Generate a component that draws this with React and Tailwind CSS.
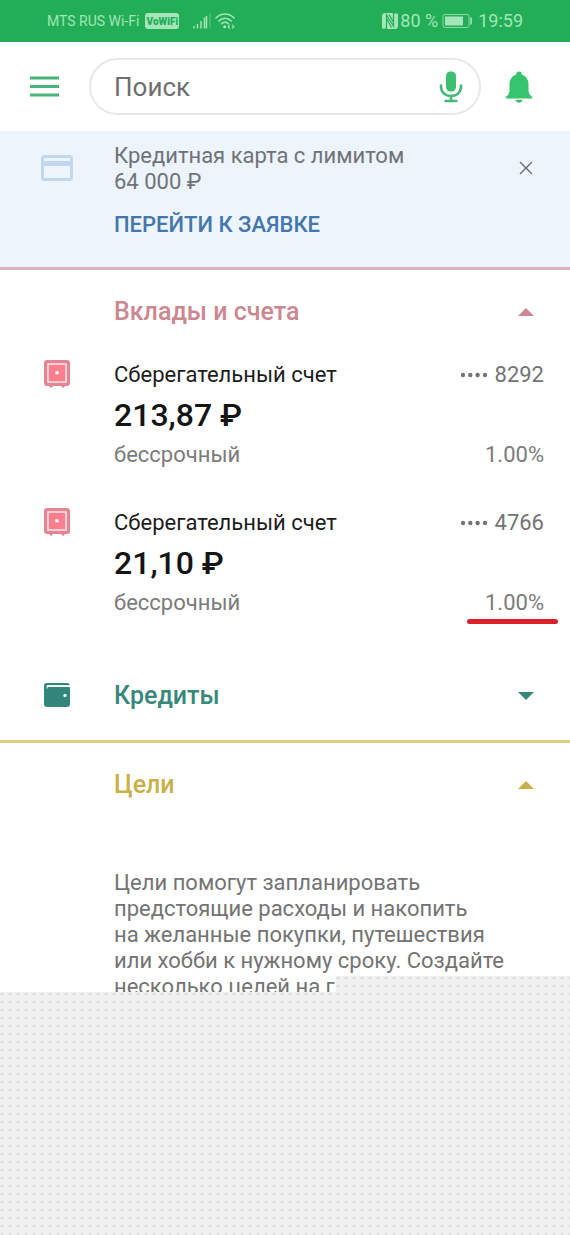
import React from "react";

const TEXT = "text-[22px] leading-[26px]";
const DOTTED =
  "bg-[#f0f0f0] bg-[radial-gradient(circle_at_2px_2px,#e0e0e0_1px,transparent_2px)] bg-[size:8px_8px]";

function Caret({ down }) {
  return (
    <svg viewBox="0 0 16 8" aria-hidden="true" className="h-2 w-4">
      <path d={down ? "M0 0h16L8 8z" : "M0 8h16L8 0z"} fill="currentColor" />
    </svg>
  );
}

function SafeIcon() {
  return (
    <svg viewBox="0 0 26 28" aria-hidden="true" className="h-7 w-[26px]">
      <path d="M5 25h4l-1 2.500H6zM17 25h4l-1 2.500h-2z" fill="#d9808f" />
      <rect width="26" height="26" rx="3" fill="#e58594" />
      <rect x="4" y="4" width="18" height="18" fill="#fd7f8e" stroke="#fce9eb" strokeWidth="1.500" />
      <rect x="11.300" y="11.300" width="3.400" height="3" rx="0.600" fill="#fff" />
    </svg>
  );
}

function WalletIcon() {
  return (
    <svg viewBox="0 0 26 26" aria-hidden="true" className="h-[26px] w-[26px]">
      <path
        fill="#33867b"
        d="M3 0h20a3 3 0 0 1 3 2.400H3.400a.8.8 0 0 0 0 1.600H25a1 1 0 0 1 1 1V21a3 3 0 0 1-3 3H3a3 3 0 0 1-3-3V3a3 3 0 0 1 3-3z"
      />
      <path fill="#fff" d="M3.600 2.300H26v1.500H3.600v1.700H2.700V3.200q0-.9.9-.9z" />
      <circle cx="21" cy="12.500" r="1.700" fill="#e6f6f3" />
    </svg>
  );
}

function StatusBar() {
  return (
    <div className="flex h-[42px] items-center justify-between bg-[#22ad57] px-[47px] text-[#a4e6b8]">
      <div className="flex items-center">
        <span className="text-[14px] leading-4">MTS RUS Wi-Fi</span>
        <span className="ml-1.5 flex h-4 w-[34px] items-center justify-center rounded-[3px] bg-[#a4e6b8] text-[10px] font-black text-[#22ad57]">
          VoWiFi
        </span>
        <svg viewBox="0 0 18 16" aria-hidden="true" className="ml-3.5 h-4 w-[18px]">
          <path d="M1 13v2.500M4.500 11v4.500M8 8v7.500M11.500 4.500v11M13.500 3v12.500" stroke="currentColor" strokeWidth="1.500" fill="none" />
          <path d="M17 0v15.500" stroke="currentColor" strokeWidth="1" opacity="0.45" />
        </svg>
        <svg viewBox="0 0 20 16" aria-hidden="true" className="ml-1 h-4 w-5">
          <g fill="none" stroke="currentColor" strokeWidth="1.600" strokeLinecap="round">
            <path d="M1 5c5-5.300 13-5.300 18 0M3.800 8c3.500-3.700 9-3.700 12.400 0M6.600 10.800c2-2 4.700-2 6.600-.2" />
            <path d="M14.500 12.200L13.200 13.700l1.300 1.500M17.500 12.200l1.300 1.500-1.300 1.500" strokeWidth="1.200" />
          </g>
          <circle cx="9.700" cy="13.700" r="1.500" fill="currentColor" />
        </svg>
      </div>
      <div className="flex items-center text-[18px] leading-5">
        <svg viewBox="0 0 16 16" aria-hidden="true" className="h-4 w-4">
          <path d="M3 0h8l2 1 1-1a2 2 0 0 1 2 2v11a3 3 0 0 1-3 3H5l-1.500-1L2 16a2 2 0 0 1-2-2V3a3 3 0 0 1 3-3z" fill="currentColor" />
          <path d="M4.500 16V2l7 11V0M5 6l4.500 8.500M7 1.500l4 7" fill="none" stroke="#22ad57" strokeWidth="1.200" />
        </svg>
        <span className="ml-0.5">80 %</span>
        <svg viewBox="0 0 30 16" aria-hidden="true" className="mr-1.5 ml-1 h-4 w-[30px]">
          <rect x="1" y="1.500" width="26" height="13" rx="2" fill="none" stroke="currentColor" strokeWidth="1" opacity="0.8" />
          <rect x="3" y="3.500" width="18" height="9" fill="currentColor" />
          <path d="M29 4.500v7" stroke="currentColor" strokeWidth="1.600" />
        </svg>
        <span>19:59</span>
      </div>
    </div>
  );
}

function Header() {
  return (
    <header className="flex h-[89px] items-center pr-[37px] pl-[29px]">
      <button type="button" aria-label="Меню" className="h-6 w-[31px] shrink-0">
        <svg viewBox="0 0 31 24" aria-hidden="true" className="h-6 w-[31px]">
          <path d="M1 3h29M1 11.500h29M1 20h29" stroke="#49b57b" strokeWidth="3" />
        </svg>
      </button>
      <label className="ml-[29px] flex h-[57px] min-w-0 flex-1 items-center rounded-full border-2 border-[#e8e8e8] pr-4 pl-[23px]">
        <input
          type="text"
          aria-label="Поиск"
          placeholder="Поиск"
          className="w-full min-w-0 flex-1 bg-transparent text-[26px] leading-8 text-[#6e6e6e] outline-none placeholder:text-[#6e6e6e]"
        />
        <button type="button" aria-label="Голосовой поиск" className="h-8 w-6 shrink-0">
          <svg viewBox="0 0 24 32" aria-hidden="true" className="h-8 w-6">
            <rect x="7" y="0.500" width="10" height="20" rx="4.500" fill="#3cc06f" />
            <path d="M2 14.500v1c0 5.500 4 9.500 10 9.500s10-4 10-9.500v-1" fill="none" stroke="#43b877" strokeWidth="2.600" strokeLinecap="round" />
            <path d="M12 25v4M6.500 30h11" fill="none" stroke="#43b877" strokeWidth="2.400" strokeLinecap="round" />
          </svg>
        </button>
      </label>
      <button type="button" aria-label="Уведомления" className="ml-6 h-8 w-7 shrink-0">
        <svg viewBox="0 0 28 32" aria-hidden="true" className="h-8 w-7">
          <path
            fill="#36c46c"
            d="M14 0.500c1.700 0 2.800 1.100 2.800 2.700v.6c4.400 1.200 6.700 5 6.700 9.700v7l1.300 3.300 2.200 1.900c.8.700.5 1.800-.4 1.800H1.400c-.9 0-1.200-1.100-.4-1.800l2.200-1.900 1.300-3.300v-7c0-4.700 2.300-8.500 6.700-9.700v-.6C11.200 1.600 12.300.5 14 .5z"
          />
          <path d="M10.500 28.800h7c-.3 1.800-1.700 3-3.500 3s-3.200-1.200-3.500-3z" fill="#45b878" />
        </svg>
      </button>
    </header>
  );
}

function Offer() {
  return (
    <section className="flex items-start border-b-[3px] border-[#dfb3bb] bg-[#edf4fc] pt-3 pr-[37px] pb-7 pl-[41px]">
      <svg viewBox="0 0 32 26" aria-hidden="true" className="mt-3 h-[26px] w-8 shrink-0">
        <rect x="1.500" y="1.500" width="29" height="23" rx="2" fill="none" stroke="#c1d6ef" strokeWidth="3" />
        <path d="M1 8.500h30" stroke="#c1d6ef" strokeWidth="5" />
      </svg>
      <div className="ml-[41px] flex-1">
        <p className={`${TEXT} text-[#6f7378]`}>
          Кредитная карта с лимитом
          <br />
          64 000 ₽
        </p>
        <a href="#application" className="mt-4 block text-[22px] leading-[28px] font-medium text-[#4477ac]">
          ПЕРЕЙТИ К ЗАЯВКЕ
        </a>
      </div>
      <button type="button" aria-label="Закрыть" className="mt-[18px] h-[14px] w-[14px]">
        <svg viewBox="0 0 14 14" aria-hidden="true" className="h-[14px] w-[14px]">
          <path d="M1 1l12 12M13 1L1 13" stroke="#686c72" strokeWidth="1.400" />
        </svg>
      </button>
    </section>
  );
}

function SectionTitle({ title, icon, down, className }) {
  return (
    <h2 className={className}>
      <button type="button" className="flex h-8 w-full items-center pr-9 pl-11 text-left">
        <span className="w-[70px] shrink-0">{icon}</span>
        <span className="flex-1 text-[25px] leading-8 font-medium">{title}</span>
        <Caret down={down} />
      </button>
    </h2>
  );
}

function Account({ name, number, amount, marked }) {
  return (
    <li className="flex items-start pr-[26px] pl-11">
      <div className="w-[70px] shrink-0">
        <SafeIcon />
      </div>
      <div className="flex-1 pt-0.5">
        <div className={`flex justify-between ${TEXT}`}>
          <span className="text-[#1c1c1c]">{name}</span>
          <span className="flex items-center gap-[7px] text-[#737373]">
            <svg viewBox="0 0 28 6" aria-hidden="true" className="h-1.5 w-7" fill="currentColor">
              <circle cx="3" cy="3" r="2.200" />
              <circle cx="10.300" cy="3" r="2.200" />
              <circle cx="17.600" cy="3" r="2.200" />
              <circle cx="25" cy="3" r="2.200" />
            </svg>
            {number}
          </span>
        </div>
        <p className="my-[7px] text-[32px] leading-10 font-medium text-[#141414]">{amount}</p>
        <div className={`flex justify-between text-[#7b7b7b] ${TEXT}`}>
          <span>бессрочный</span>
          <span className="relative">
            1.00%
            {marked && <span className="absolute -right-3.5 -bottom-2 h-[5px] w-[91px] rounded-full bg-[#dc2029]" />}
          </span>
        </div>
      </div>
    </li>
  );
}

export default function App() {
  return (
    <div className="min-h-screen bg-white font-['Roboto','Noto_Sans',sans-serif]">
      <StatusBar />
      <Header />
      <main>
        <Offer />
        <SectionTitle title="Вклады и счета" className="mt-[26px] text-[#cc8790]" />
        <ul className="mt-8 flex flex-col gap-10">
          <Account name="Сберегательный счет" number="8292" amount="213,87 ₽" />
          <Account name="Сберегательный счет" number="4766" amount="21,10 ₽" marked />
        </ul>
        <SectionTitle title="Кредиты" icon={<WalletIcon />} down className="mt-16 text-[#37877d]" />
        <div className="mt-7 h-[3px] bg-[#dbce88]" />
        <SectionTitle title="Цели" className="mt-[26px] text-[#c9b04a]" />
        <div className="relative mt-[69px] h-[122px] overflow-hidden">
          <p className={`pl-[114px] whitespace-nowrap text-[#737373] ${TEXT}`}>
            Цели помогут запланировать
            <br />
            предстоящие расходы и накопить
            <br />
            на желанные покупки, путешествия
            <br />
            или хобби к нужному сроку. Создайте
            <br />
            несколько целей на г
          </p>
          <div className={`absolute right-0 bottom-0 left-[336px] h-4 ${DOTTED}`} />
        </div>
        <div className={`h-[243px] ${DOTTED}`} />
      </main>
    </div>
  );
}
